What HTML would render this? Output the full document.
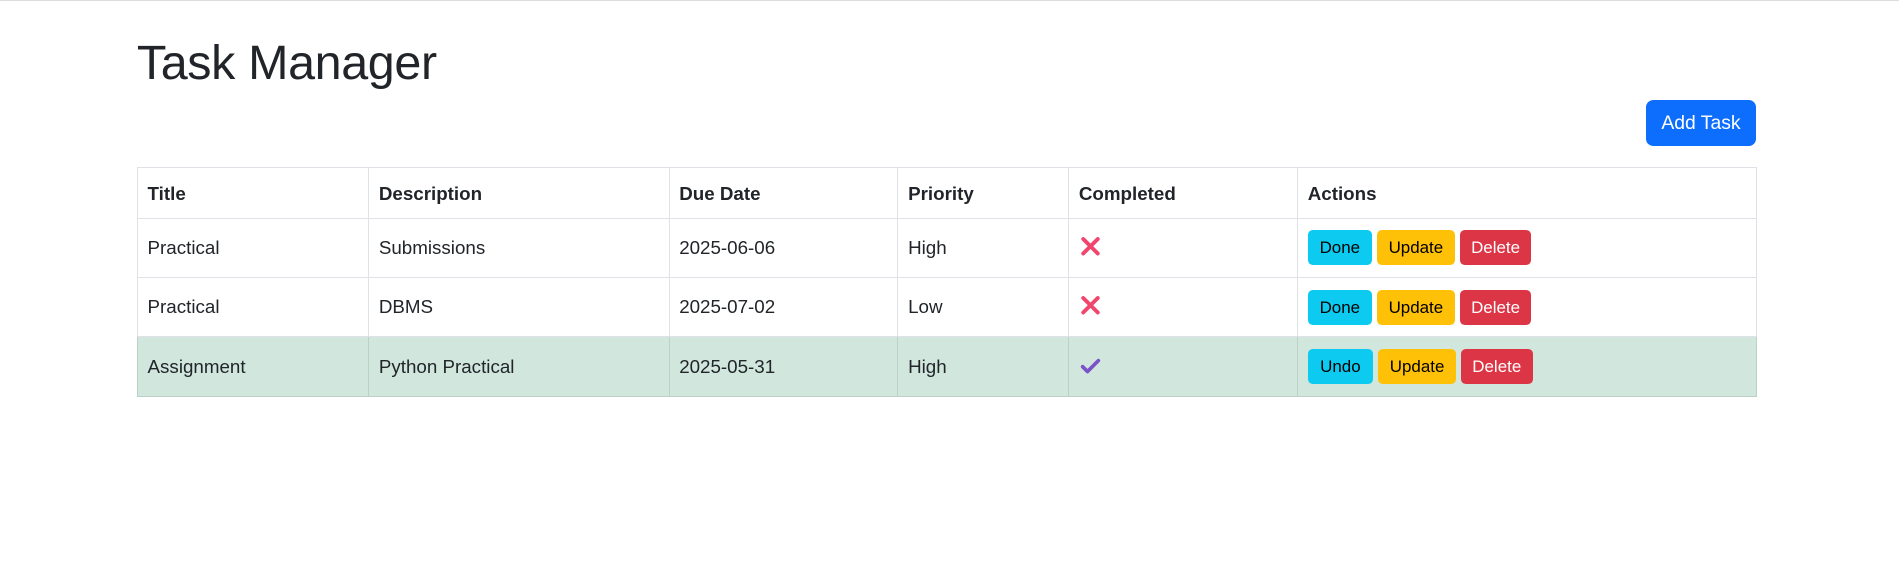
<!DOCTYPE html>
<html><head><meta charset="utf-8"><style>
html,body{margin:0;padding:0;background:#fff;}
body{width:1568px;zoom:1.2111;font-family:"Liberation Sans","DejaVu Sans",sans-serif;color:#212529;font-size:16px;border-top:1px solid #ddd;}
.c{position:relative;margin-left:113px;width:1337px;}
h1{margin:0;padding-top:27px;font-size:40px;font-weight:500;line-height:48px;letter-spacing:-0.3px}
.add{position:absolute;right:0;top:82px;width:91px;height:38px;background:#0d6efd;color:#fff;border-radius:6px;font-size:16px;line-height:38px;text-align:center}
table{position:absolute;top:137px;left:0;width:1337px;border-collapse:collapse;table-layout:fixed}
td,th{border:1px solid #dee2e6;padding:0 8px;text-align:left;font-size:15.5px;box-sizing:border-box}
th{height:42px;font-weight:bold;padding-top:2px}
td{height:49px}
tr.s td{background:#d1e7dd;border-color:#bcd0c7}
.b{display:inline-block;height:29px;line-height:29px;border-radius:4px;font-size:14px;text-align:center;margin-right:0;vertical-align:middle}
.d{background:#0dcaf0;color:#000;width:53px}
.u{background:#ffc107;color:#000;width:64px}
.x{background:#dc3545;color:#fff;width:59px}
svg{vertical-align:middle;position:relative;top:-2px}
</style></head><body><div class="c">
<h1>Task Manager</h1>
<div class="add">Add Task</div>
<table>
<colgroup><col style="width:191px"><col style="width:248px"><col style="width:189px"><col style="width:141px"><col style="width:189px"><col style="width:379px"></colgroup>
<tr><th>Title</th><th>Description</th><th>Due Date</th><th>Priority</th><th>Completed</th><th>Actions</th></tr>
<tr><td>Practical</td><td>Submissions</td><td>2025-06-06</td><td>High</td><td><svg width="19" height="17" viewBox="0 0 17 17"><path d="M2.5 2.5L14.5 14.5M14.5 2.5L2.5 14.5" stroke="#f1466b" stroke-width="3.2" stroke-linecap="round"/></svg></td><td><span class="b d">Done</span> <span class="b u">Update</span> <span class="b x">Delete</span></td></tr>
<tr><td>Practical</td><td>DBMS</td><td>2025-07-02</td><td>Low</td><td><svg width="19" height="17" viewBox="0 0 17 17"><path d="M2.5 2.5L14.5 14.5M14.5 2.5L2.5 14.5" stroke="#f1466b" stroke-width="3.2" stroke-linecap="round"/></svg></td><td><span class="b d">Done</span> <span class="b u">Update</span> <span class="b x">Delete</span></td></tr>
<tr class="s"><td>Assignment</td><td>Python Practical</td><td>2025-05-31</td><td>High</td><td><svg width="19" height="14" viewBox="0 0 17 14"><path d="M2 8L6 12L15 3" stroke="#7b52c9" stroke-width="3" fill="none" stroke-linecap="round" stroke-linejoin="round"/></svg></td><td><span class="b d" style="width:54px">Undo</span> <span class="b u">Update</span> <span class="b x">Delete</span></td></tr>
</table>
</div></body></html>
